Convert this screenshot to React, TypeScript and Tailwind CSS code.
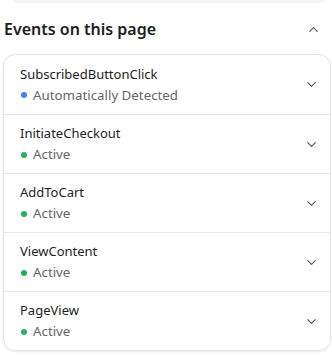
import { ChevronDown, ChevronUp } from 'lucide-react'

const events = [
  { name: 'SubscribedButtonClick', status: 'Automatically Detected', dot: 'bg-[#3b82f6]' },
  { name: 'InitiateCheckout', status: 'Active', dot: 'bg-[#22b35e]' },
  { name: 'AddToCart', status: 'Active', dot: 'bg-[#22b35e]' },
  { name: 'ViewContent', status: 'Active', dot: 'bg-[#22b35e]' },
  { name: 'PageView', status: 'Active', dot: 'bg-[#22b35e]' },
]

function App() {
  return (
    <div className="w-[332px] h-[358px] bg-white overflow-hidden font-['Segoe_UI','Noto_Sans',sans-serif] text-[#1c1e21]">
      <div className="ml-[14px] mr-[8px] h-[3px] rounded-b-lg bg-[#f5f5f5]" />

      <div className="flex items-center justify-between pl-[4px] pr-[11px] mt-[15px] h-[22px]">
        <h2 className="text-[16px] font-semibold">Events on this page</h2>
        <ChevronUp size={15} strokeWidth={1.75} className="text-[#555]" />
      </div>

      <div className="mt-[14px] ml-[3px] w-[328px] rounded-[12px] border border-[#e4e4e4] shadow-[0_1px_2px_rgba(0,0,0,0.08)]">
        {events.map((e, i) => (
          <div
            key={e.name}
            className={`flex items-center justify-between h-[59px] pl-[16px] pr-[11px] ${i > 0 ? 'border-t border-[#e6e6e6]' : ''}`}
          >
            <div className="flex flex-col">
              <span className="text-[13px] leading-[21px]">{e.name}</span>
              <span className="flex items-center text-[13.3px] leading-[21px] text-[#606770]">
                <span className={`w-[6px] h-[6px] rounded-full ${e.dot} ml-[1px] mr-[6px]`} />
                {e.status}
              </span>
            </div>
            <ChevronDown size={15} strokeWidth={1.75} className="text-[#555]" />
          </div>
        ))}
      </div>
    </div>
  )
}

export default App
